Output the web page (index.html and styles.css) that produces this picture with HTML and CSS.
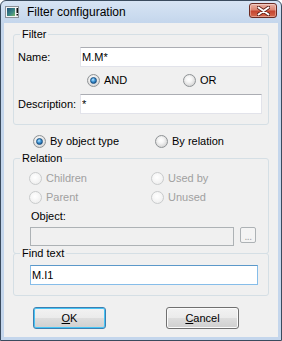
FILE: index.html
```html
<!DOCTYPE html>
<html>
<head>
<meta charset="utf-8">
<link rel="stylesheet" href="styles.css">
</head>
<body>
<div class="window">
  <div class="titlebar">
    <svg class="appicon" width="15" height="13" viewBox="0 0 15 13">
      <defs>
        <linearGradient id="ig" x1="0" y1="0" x2="1" y2="1">
          <stop offset="0" stop-color="#1d4f7a"/>
          <stop offset="0.6" stop-color="#3f8a86"/>
          <stop offset="1" stop-color="#7ab86a"/>
        </linearGradient>
      </defs>
      <rect x="0.5" y="0.5" width="13" height="11" fill="#f4f4f4" stroke="#8a8f96"/>
      <rect x="2" y="2" width="8" height="8" fill="url(#ig)"/>
      <rect x="11.5" y="2" width="1.5" height="5" fill="#111"/>
      <rect x="11.5" y="8" width="1.5" height="1.5" fill="#111"/>
    </svg>
    <span class="title">Filter configuration</span>
    <span class="spacer"></span>
    <span class="closebtn">
      <svg width="13" height="10" viewBox="0 0 13 10">
        <path d="M1.5 1.5 L11.5 8.5 M11.5 1.5 L1.5 8.5" stroke="#5a1e16" stroke-width="3.6" stroke-linecap="round"/>
        <path d="M1.5 1.5 L11.5 8.5 M11.5 1.5 L1.5 8.5" stroke="#ffffff" stroke-width="2" stroke-linecap="round"/>
      </svg>
    </span>
  </div>
  <div class="client">
    <fieldset class="group filter">
      <legend>Filter</legend>
      <div class="filter-body">
        <div class="row">
          <label class="lbl">Name:</label>
          <input class="tb wide" type="text" value="M.M*">
        </div>
        <div class="radiorow logic">
          <span class="opt and"><span class="radio checked"></span><span>AND</span></span>
          <span class="opt"><span class="radio"></span><span>OR</span></span>
        </div>
        <div class="row desc">
          <label class="lbl">Description:</label>
          <input class="tb wide" type="text" value="*">
        </div>
      </div>
    </fieldset>

    <div class="radiorow mode">
      <span class="opt c1"><span class="radio checked"></span><span>By object type</span></span>
      <span class="opt"><span class="radio"></span><span>By relation</span></span>
    </div>

    <fieldset class="group relation">
      <legend>Relation</legend>
      <div class="rel-body">
        <div class="radiorow dis">
          <span class="opt c1"><span class="radio disabled"></span><span>Children</span></span>
          <span class="opt"><span class="radio disabled"></span><span>Used by</span></span>
        </div>
        <div class="radiorow dis r2">
          <span class="opt c1"><span class="radio disabled"></span><span>Parent</span></span>
          <span class="opt"><span class="radio disabled"></span><span>Unused</span></span>
        </div>
        <div class="objlbl">Object:</div>
        <div class="objrow">
          <input class="tb obj" type="text" disabled>
          <span class="dots">...</span>
        </div>
      </div>
    </fieldset>

    <fieldset class="group find">
      <legend>Find text</legend>
      <div class="find-body">
        <input class="tb focus" type="text" value="M.I1">
      </div>
    </fieldset>

    <div class="buttons">
      <span class="btn default"><u>O</u>K</span>
      <span class="btn"><u>C</u>ancel</span>
    </div>
  </div>
</div>
</body>
</html>
```

FILE: styles.css
```css
html, body {
  margin: 0;
  padding: 0;
  background: #ffffff;
}

.window {
  width: 282px;
  height: 341px;
  box-sizing: border-box;
  border: 1px solid #3a4b5e;
  border-radius: 6px 6px 0 0;
  background: linear-gradient(#d7e4f4 0px, #c4d6ec 22px, #c4d6ec 100%);
  display: flex;
  flex-direction: column;
  font-family: "Liberation Sans", Arial, sans-serif;
  font-size: 11px;
  color: #000;
}

.titlebar {
  height: 22px;
  display: flex;
  align-items: center;
  padding: 0 4px 0 4px;
}

.appicon {
  margin-top: 1px;
  flex: none;
}

.title {
  margin-left: 7px;
  font-size: 12px;
  color: #000;
}

.spacer {
  flex: 1;
}

.closebtn {
  width: 28px;
  height: 15px;
  box-sizing: border-box;
  border: 1px solid #6b2b22;
  border-radius: 3px;
  background: linear-gradient(#eab2a5 0%, #dc8672 45%, #c5452f 55%, #d56a4e 100%);
  display: flex;
  align-items: center;
  justify-content: center;
  margin-top: -3px;
  box-shadow: inset 0 0 0 1px rgba(255,255,255,0.35);
}

.client {
  flex: 1;
  margin: 0 3px 3px 3px;
  background: #f0f0f0;
  padding: 5px 9px 0 9px;
  display: flex;
  flex-direction: column;
}

.group {
  margin: 0;
  padding: 0;
  border: 1px solid #d5dfe5;
  border-radius: 3px;
  min-width: 0;
}

.group legend {
  margin-left: 6px;
  padding: 0 2px;
  line-height: 13px;
  height: 13px;
  background: #f0f0f0;
  position: relative;
}

.filter-body {
  padding: 6px 6px 10px 4px;
}

.row {
  display: flex;
  align-items: center;
  height: 20px;
}

.lbl {
  width: 62px;
  flex: none;
  line-height: 13px;
}

.tb {
  box-sizing: border-box;
  height: 20px;
  margin: 0;
  padding: 0 1px;
  border: 1px solid #e2e3ea;
  border-top-color: #abadb3;
  background: #ffffff;
  font-family: "Liberation Sans", Arial, sans-serif;
  font-size: 11px;
  color: #000;
  outline: none;
}

.tb.wide {
  width: 182px;
}

.desc {
  margin-top: 7px;
}

.radiorow {
  display: flex;
  align-items: center;
  height: 13px;
  line-height: 13px;
}

.opt {
  display: flex;
  align-items: center;
  gap: 4px;
}

.logic {
  margin-top: 7px;
  padding-left: 69px;
}

.logic .and {
  width: 96px;
}

.radio {
  width: 13px;
  height: 13px;
  box-sizing: border-box;
  border-radius: 50%;
  border: 1px solid #8f9396;
  background: radial-gradient(circle at 45% 40%, #ffffff 0%, #f6f6f6 30%, #d6d6d6 75%, #ececec 100%);
  position: relative;
  flex: none;
}

.radio.checked::after {
  content: "";
  position: absolute;
  left: 2px;
  top: 2px;
  width: 7px;
  height: 7px;
  box-sizing: border-box;
  border-radius: 50%;
  border: 1px solid #1a4f80;
  background: radial-gradient(circle at 40% 35%, #c4e8ff 0%, #4fa4e0 35%, #155c9c 80%);
}

.radio.disabled {
  border-color: #c9cbcc;
  background: radial-gradient(circle at 45% 40%, #ffffff 0%, #f7f7f7 40%, #e9e9e9 100%);
}

.mode {
  margin-top: 10px;
  padding-left: 20px;
}

.c1 {
  width: 122px;
}

.relation {
  margin-top: 4px;
}

.rel-body {
  padding: 7px 10px 7px 15px;
}

.dis {
  color: #a0a0a0;
}

.r2 {
  margin-top: 6px;
}

.objlbl {
  margin-top: 6px;
  padding-left: 2px;
  line-height: 13px;
}

.objrow {
  margin-top: 4px;
  display: flex;
  align-items: flex-start;
  padding-left: 1px;
}

.tb.obj {
  width: 204px;
  height: 19px;
  background: #f0f0f0;
  border: 1px solid #adb2b5;
  border-top-color: #adb2b5;
}

.dots {
  margin-left: 6px;
  width: 16px;
  height: 16px;
  box-sizing: border-box;
  border: 1px solid #adb2b5;
  border-radius: 2px;
  background: #f4f4f4;
  color: #a0a0a0;
  font-size: 10px;
  line-height: 17px;
  text-align: center;
  letter-spacing: -0.5px;
}

.find {
  margin-top: -7px;
}

.find-body {
  padding: 5px 10px 10px 16px;
}

.tb.focus {
  width: 228px;
  border: 1px solid #86bde9;
  border-top-color: #5b98c9;
}

.buttons {
  margin-top: 11px;
  display: flex;
  padding-left: 20px;
  gap: 60px;
}

.btn {
  width: 73px;
  height: 22px;
  box-sizing: border-box;
  border: 1px solid #707070;
  border-radius: 3px;
  background: linear-gradient(#f2f2f2 0%, #ebebeb 48%, #dddddd 52%, #cfcfcf 100%);
  display: flex;
  align-items: center;
  justify-content: center;
  box-shadow: inset 0 0 0 1px #fbfbfb;
}

.btn u {
  text-decoration: underline;
  text-underline-offset: 1px;
}

.btn.default {
  border-color: #3c7fb1;
  box-shadow: inset 0 0 0 1px #47c4f5;
}
```
